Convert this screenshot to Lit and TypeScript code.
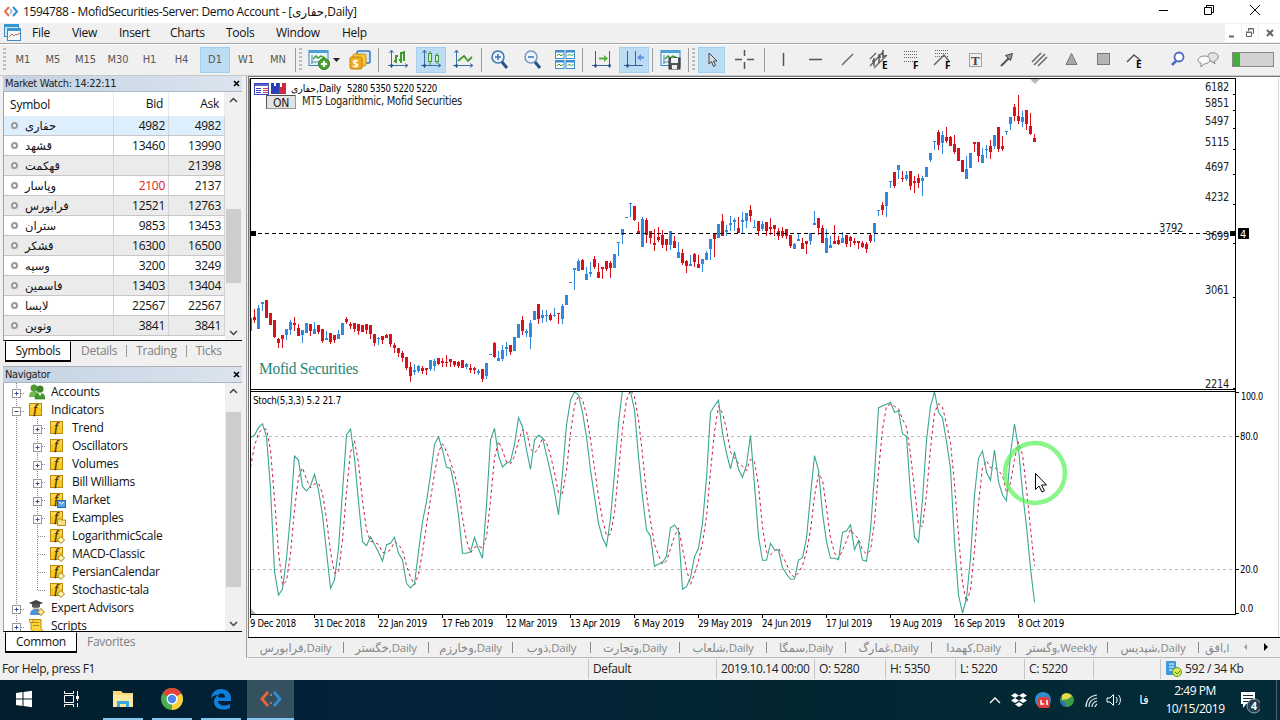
import { LitElement, css, html, svg, nothing, SVGTemplateResult } from 'lit';
import { customElement, property } from 'lit/decorators.js';
import { classMap } from 'lit/directives/class-map.js';

// u/d = bull/bear, then high, body top, body bottom, low (chart pixels)
const CANDLES = `
u 318 318 331 331|d 309 317 320 323|u 305 308 329 329|u 302 302 304 311|d 300 300 318 318
d 313 313 325 325|d 320 320 337 338|d 338 339 343 348|d 335 335 339 348|u 329 329 335 340
u 320 322 330 335|d 317 323 325 331|d 324 328 336 336|u 330 330 335 343|u 323 323 333 333
d 324 324 331 336|u 322 329 334 334|d 325 325 332 334|d 329 329 341 343|u 331 338 340 340
d 333 333 342 344|d 335 335 340 343|u 330 334 339 339|u 323 323 335 335|d 317 319 322 324
d 322 324 326 329|d 323 323 329 332|d 324 324 331 335|d 325 325 332 332|d 324 324 330 334
d 325 325 334 339|d 334 334 343 346|u 337 338 339 345|d 336 336 340 344|d 334 335 338 338
d 334 334 344 347|d 343 345 348 353|d 348 348 353 357|d 351 353 358 362|d 357 357 368 370
d 362 367 376 382|u 364 370 372 375|u 365 366 371 373|d 366 368 371 374|d 368 368 370 375
u 360 360 369 371|u 359 361 366 371|d 358 358 364 365|d 358 361 363 367|d 355 362 363 367
d 359 359 362 367|d 361 361 365 367|d 361 362 366 368|d 360 360 368 368|u 363 364 367 369
d 364 368 370 373|d 367 368 370 374|u 369 371 373 375|d 369 369 379 382|u 363 363 376 379
u 354 354 355 355|d 342 343 357 358|u 351 358 361 361|u 345 350 359 361|u 342 347 349 356
d 345 345 352 355|u 337 337 351 351|u 324 324 338 338|d 316 320 331 335|u 329 331 333 337
u 320 323 337 349|u 311 311 320 320|d 304 304 319 324|u 310 315 318 323|u 310 315 316 322
d 313 315 320 321|u 308 315 316 317|d 313 313 314 324|u 304 306 319 324|u 295 295 305 305
u 282 282 283 283|u 268 268 270 290|u 259 261 271 271|d 259 260 270 270|u 267 274 280 280
u 262 272 274 277|d 256 259 267 269|d 263 272 278 278|d 267 267 269 279|d 261 261 269 271
d 261 263 268 278|u 254 254 268 268|u 242 242 243 256|u 229 229 235 244|u 217 217 218 218
u 203 203 204 217|d 206 206 220 221|d 222 231 233 233|u 217 219 247 247|d 218 220 235 243
d 231 231 238 244|d 229 243 245 251|d 227 237 240 242|d 230 235 245 248|d 239 239 245 251
u 231 231 245 250|d 236 241 248 248|u 242 252 258 258|d 249 253 263 265|d 260 261 266 273
u 255 264 266 266|d 253 254 262 267|d 255 264 268 268|u 259 259 264 272|u 251 253 260 260
u 239 239 249 260|d 233 233 239 257|u 224 224 238 238|d 214 221 236 236|u 225 230 232 236
u 216 223 225 231|u 218 220 222 231|d 217 228 233 233|u 212 220 222 233|u 213 213 221 228
d 205 210 216 222|u 220 227 228 228|d 221 221 231 236|u 221 224 229 231|d 222 222 231 236
d 218 227 229 235|d 225 225 229 236|d 228 231 236 240|d 227 231 236 238|d 229 229 236 239
d 235 235 246 248|u 243 244 249 249|u 233 239 241 241|d 238 243 249 249|d 241 241 244 254
u 233 233 241 245|u 211 223 225 225|d 218 218 228 235|d 225 228 243 243|u 229 238 253 253
u 236 245 248 248|d 225 241 244 244|d 236 240 244 245|u 232 238 243 243|d 235 235 244 247
d 236 237 241 247|d 238 241 243 245|d 241 241 243 249|d 241 243 247 248|d 242 244 249 253
d 233 235 241 243|u 223 223 233 242|u 210 210 211 216|d 202 205 210 215|u 192 192 206 217
u 181 181 182 188|d 172 172 186 188|u 165 165 170 179|d 171 178 179 182|u 171 175 179 181
d 171 171 186 190|d 176 181 183 193|d 174 178 183 188|u 176 178 181 196|u 167 167 177 177
u 153 153 160 162|u 141 141 142 150|d 130 132 145 150|u 131 135 143 154|d 127 137 141 143
d 136 137 146 146|d 135 144 152 154|d 148 148 161 161|d 160 160 172 172|u 156 169 179 179
u 153 153 168 168|d 142 142 144 152|d 142 142 156 162|u 148 155 163 163|u 145 149 150 158
d 140 146 152 159|u 135 135 146 149|d 127 127 149 152|d 136 146 149 151|u 131 131 132 135
u 117 117 124 130|d 104 107 116 121|d 95 116 121 124|u 111 117 122 127|d 110 110 124 130
d 113 126 134 135|d 134 138 142 142`
  .trim()
  .split(/[|\n]/)
  .map((row) => {
    const [dir, ...v] = row.split(' ');
    return { up: dir === 'u', v: v.map(Number) };
  });

// %K line, in thirds of a pixel below y = 385
const STOCH = [
  158, 150, 128, 116, 155, 310, 560, 630, 612, 520, 390, 213, 226, 305, 318, 303, 268, 315, 390, 500, 610, 585, 490,
  320, 150, 132, 220, 350, 470, 482, 455, 478, 502, 528, 479, 475, 457, 505, 525, 595, 609, 596, 500, 410, 350, 270,
  178, 156, 195, 247, 250, 305, 390, 505, 505, 500, 457, 492, 520, 360, 165, 130, 212, 246, 235, 229, 178, 98, 125,
  195, 253, 165, 151, 158, 210, 262, 320, 390, 265, 120, 45, 20, 30, 82, 155, 255, 335, 415, 458, 484, 400, 265, 115,
  14, 10, 20, 75, 215, 335, 435, 453, 544, 537, 533, 513, 428, 420, 437, 613, 605, 578, 515, 490, 415, 280, 82, 62, 46,
  145, 205, 252, 200, 253, 277, 240, 151, 300, 455, 526, 526, 475, 494, 496, 548, 567, 583, 582, 525, 518, 460, 330,
  212, 255, 385, 470, 520, 520, 524, 442, 438, 419, 494, 467, 525, 529, 435, 270, 68, 63, 58, 52, 82, 78, 147, 153,
  325, 457, 472, 345, 165, 65, 20, 82, 98, 170, 250, 470, 630, 684, 640, 520, 330, 220, 198, 262, 286, 195, 290, 330,
  347, 205, 117, 190, 320, 425, 550, 652,
].map((v) => 385 + v / 3);

const SIGNAL = STOCH.map((v, i) => {
  if (i < 2) return i === 0 ? 467 : 446;
  return (v + STOCH[i - 1] + STOCH[i - 2]) / 3;
});

const barX = (i: number): number => 250.5 + i * 4;
const toPoints = (ys: number[]): string => ys.map((y, i) => `${barX(i)},${y.toFixed(1)}`).join(' ');

const PRICES: [string, number, number][] = [
  ['6182', 91, 94.5],
  ['5851', 107, 110.5],
  ['5497', 125, 128.5],
  ['5115', 146, 149.5],
  ['4697', 171, 174.5],
  ['4232', 201, 204.5],
  ['3699', 240, 243.5],
  ['3061', 294, 297.5],
  ['2214', 388, 388.5],
];

const DATES: [string, number, number][] = [
  ['9 Dec 2018', 250, 46],
  ['31 Dec 2018', 314, 51],
  ['22 Jan 2019', 378, 49],
  ['17 Feb 2019', 442, 51],
  ['12 Mar 2019', 506, 51],
  ['13 Apr 2019', 570, 50],
  ['6 May 2019', 634, 50],
  ['29 May 2019', 698, 54],
  ['24 Jun 2019', 762, 49],
  ['17 Jul 2019', 826, 46],
  ['19 Aug 2019', 890, 52],
  ['16 Sep 2019', 954, 51],
  ['8 Oct 2019', 1018, 46],
];

const QUOTES: { symbol: string; bid: string; ask: string; down?: boolean }[] = [
  { symbol: 'حفاری', bid: '4982', ask: '4982' },
  { symbol: 'قشهد', bid: '13460', ask: '13990' },
  { symbol: 'قهکمت', bid: '', ask: '21398' },
  { symbol: 'وپاسار', bid: '2100', ask: '2137', down: true },
  { symbol: 'فرابورس', bid: '12521', ask: '12763' },
  { symbol: 'ستران', bid: '9853', ask: '13453' },
  { symbol: 'قشکر', bid: '16300', ask: '16500' },
  { symbol: 'وسپه', bid: '3200', ask: '3249' },
  { symbol: 'فاسمین', bid: '13403', ask: '13404' },
  { symbol: 'لابسا', bid: '22567', ask: '22567' },
  { symbol: 'ونوین', bid: '3841', ask: '3841' },
];

const TREE: { label: string; level: number; icon: string; box?: string; last?: boolean }[] = [
  { label: 'Accounts', level: 0, icon: 'accounts', box: '+' },
  { label: 'Indicators', level: 0, icon: 'fn', box: '-' },
  { label: 'Trend', level: 1, icon: 'fn', box: '+' },
  { label: 'Oscillators', level: 1, icon: 'fn', box: '+' },
  { label: 'Volumes', level: 1, icon: 'fn', box: '+' },
  { label: 'Bill Williams', level: 1, icon: 'fn', box: '+' },
  { label: 'Market', level: 1, icon: 'fnMarket', box: '+' },
  { label: 'Examples', level: 1, icon: 'fnFolder', box: '+' },
  { label: 'LogarithmicScale', level: 1, icon: 'fnItem' },
  { label: 'MACD-Classic', level: 1, icon: 'fnItem' },
  { label: 'PersianCalendar', level: 1, icon: 'fnItem' },
  { label: 'Stochastic-tala', level: 1, icon: 'fnItem', last: true },
  { label: 'Expert Advisors', level: 0, icon: 'expert', box: '+' },
  { label: 'Scripts', level: 0, icon: 'script', box: '+' },
];

interface Tool {
  w: number;
  text?: string;
  icon?: string;
  active?: boolean;
  sep?: boolean;
  grip?: boolean;
}

const TOOLS: Tool[] = [
  { w: 8, grip: true },
  { w: 30, text: 'M1' },
  { w: 30, text: 'M5' },
  { w: 35, text: 'M15' },
  { w: 30, text: 'M30' },
  { w: 33, text: 'H1' },
  { w: 31, text: 'H4' },
  { w: 3 },
  { w: 30, text: 'D1', active: true },
  { w: 32, text: 'W1' },
  { w: 32, text: 'MN' },
  { w: 2, sep: true },
  { w: 9, grip: true },
  { w: 27, icon: 'newChart' },
  { w: 10, icon: 'drop' },
  { w: 35, icon: 'order' },
  { w: 3, sep: true },
  { w: 36, icon: 'bars' },
  { w: 30, icon: 'candles', active: true },
  { w: 33, icon: 'line' },
  { w: 4, sep: true },
  { w: 34, icon: 'zoomIn' },
  { w: 32, icon: 'zoomOut' },
  { w: 32, icon: 'tile' },
  { w: 3, sep: true },
  { w: 35, icon: 'scroll' },
  { w: 30, icon: 'shift', active: true },
  { w: 6, sep: true },
  { w: 32, icon: 'template' },
  { w: 2, sep: true },
  { w: 9, grip: true },
  { w: 27, icon: 'cursor', active: true },
  { w: 39, icon: 'cross' },
  { w: 1, sep: true },
  { w: 3 },
  { w: 32, icon: 'vline' },
  { w: 32, icon: 'hline' },
  { w: 32, icon: 'trend' },
  { w: 32, icon: 'equi' },
  { w: 32, icon: 'fibo' },
  { w: 32, icon: 'fiboFan' },
  { w: 32, icon: 'text' },
  { w: 32, icon: 'arrow' },
  { w: 32, icon: 'channel' },
  { w: 32, icon: 'triangle' },
  { w: 32, icon: 'rect' },
  { w: 32, icon: 'elliott' },
  { w: 10 },
  { w: 32, icon: 'search' },
  { w: 28, icon: 'chat' },
  { w: 10 },
];

const axes = svg`<path d="M4.5 2v17M1 16.500h19M2.500 4l2-3 2 3M18 14.500l3 2-3 2" stroke="#3f6ea5" fill="none"/>
  <circle cx="4.500" cy="16.500" r="1.500" fill="#2a5599"/>`;

const chartWindow = svg`<rect x="1" y="1.500" width="19" height="15" fill="#e9f4fc" stroke="#3a86c0"/>
  <rect x="1" y="1" width="19" height="3" fill="#4d9fd8"/>
  <path d="M4 6v9M3 13h15" stroke="#5588aa" fill="none"/>
  <path d="M5 10l3-3 2 2 3-2 4 2" stroke="#3c9a2b" fill="none" stroke-width="1.500"/>`;

const fn = svg`<rect x=".5" y="1.500" width="12" height="12" fill="#fbc822" stroke="#b98a10"/>
  <rect x="1" y="2" width="11" height="4" fill="#fdd850"/>
  <text x="4.500" y="11" font-family="Liberation Serif, serif" font-style="italic" font-size="12" stroke="#3a2900" stroke-width=".3" fill="#3a2900">f</text>`;

const ICONS: Record<string, SVGTemplateResult> = {
  newChart: svg`${chartWindow}<circle cx="16" cy="15" r="5.500" fill="#4aa52e" stroke="#2d7d18"/><path d="M16 12v6M13 15h6" stroke="#fff" stroke-width="2"/>`,
  drop: svg`<path d="M7 9h7l-3.500 4z" fill="#222"/>`,
  order: svg`<rect x="8" y="2" width="13" height="12" rx="1.500" fill="#d4e7f8" stroke="#2e77bd" stroke-width="1.500"/>
    <rect x="4" y="5" width="13" height="12" rx="1.500" fill="#f8c93a" stroke="#c98d12"/>
    <rect x="1" y="8" width="12" height="12" rx="1.500" fill="#f2a91c" stroke="#c4800e"/>
    <text x="3.500" y="18" font-family="Open Sans, sans-serif" font-weight="bold" font-size="11" fill="#fff">$</text>`,
  bars: svg`${axes}<path d="M9 6v8M7 12h2M9 7h2M14 3v11M12 11h2M14 4h3M17 2v10" stroke="#3f9b2c" stroke-width="2" fill="none"/>`,
  candles: svg`${axes}<path d="M10 2v14M17 4v11" stroke="#3f9b2c"/><rect x="8.500" y="4.500" width="3" height="8" fill="#cfeec4" stroke="#3f9b2c"/><rect x="15.500" y="6.500" width="3" height="6" fill="#cfeec4" stroke="#3f9b2c"/>`,
  line: svg`${axes}<path d="M6 12l6-5 4 5 4-4" stroke="#3f9b2c" stroke-width="1.800" fill="none"/>`,
  zoomIn: svg`<circle cx="9" cy="8" r="6" fill="#e8f3fc" stroke="#3a72b0" stroke-width="1.500"/><path d="M9 5v6M6 8h6" stroke="#3a72b0" stroke-width="1.500"/><path d="M13 13l5 6" stroke="#27518a" stroke-width="3"/>`,
  zoomOut: svg`<circle cx="9" cy="8" r="6" fill="#e8f3fc" stroke="#7b96bd" stroke-width="1.500"/><path d="M6 8h6" stroke="#3a72b0" stroke-width="1.500"/><path d="M13 13l5 6" stroke="#27518a" stroke-width="3"/>`,
  tile: svg`${[
    [1, 1],
    [11.5, 1],
    [1, 11],
    [11.5, 11],
  ].map(
    ([x, y]) => svg`<rect x=${x} y=${y} width="9.500" height="9" fill="#3c8fce"/><rect x=${x + 1} y=${y + 2.500} width="7.500" height="5.500" fill="#fff"/>
      <path d="M${x + 2} ${y + 6}l2-2 2 2 2-2" stroke="#3f9b2c" fill="none"/>`,
  )}`,
  scroll: svg`<path d="M4.500 2v17M1 16.500h19M18.500 2v17" stroke="#3f5f95" fill="none"/><circle cx="4.500" cy="16.500" r="1.500" fill="#2a5599"/><circle cx="18.500" cy="16.500" r="1.500" fill="#2a5599"/>
    <path d="M8 8.500h5V6l4 3.500-4 3.500v-2.500H8z" fill="#55b13c"/>`,
  shift: svg`<path d="M4.500 2v17M1 16.500h19M12.500 2v15" stroke="#3f5f95" fill="none"/><circle cx="4.500" cy="16.500" r="1.500" fill="#2a5599"/>
    <path d="M21 7.500h-3V5l-4 3.500 4 3.500V9.500h3z" fill="#5b8fe0"/>`,
  template: svg`${chartWindow}<rect x="9" y="9" width="11" height="11" fill="#555" stroke="#333"/><rect x="11" y="9" width="7" height="5" fill="#f3f3f3"/><rect x="12" y="16" width="5" height="4" fill="#eee"/>`,
  cursor: svg`<path d="M8 4l0 11 2.500-2.500 2 5 2-1-2-4.500H16z" fill="#ddd" stroke="#444"/>`,
  cross: svg`<path d="M10.500 1v6M10.500 13v7M1 10.500h7M13 10.500h7" stroke="#555" stroke-width="1.500"/>`,
  vline: svg`<path d="M10.500 4v13" stroke="#555" stroke-width="1.500"/>`,
  hline: svg`<path d="M4 10.500h13" stroke="#555" stroke-width="1.500"/>`,
  trend: svg`<path d="M5 16L16 5" stroke="#666" stroke-width="1.500"/>`,
  equi: svg`<path d="M1 17L14 3M5 19L18 6M1 10L7 4" stroke="#666" stroke-width="1.300"/><path d="M5 9v8M3 12h2M10 5v9M10 8h2M14 1v8M12 5h2M14 7h3" stroke="#555" stroke-width="1.500"/>
    <text x="13" y="19.500" font-family="Open Sans, sans-serif" font-weight="bold" font-size="10" fill="#000">E</text>`,
  fibo: svg`<path d="M3 2.500h14M3 5.500h14M3 8.500h14M3 12.500h10" stroke="#666" stroke-dasharray="1 1"/>
    <text x="12" y="20" font-family="Open Sans, sans-serif" font-weight="bold" font-size="10" fill="#000">F</text>`,
  fiboFan: svg`<path d="M2 1.500h13M2 4.500h13M2 7.500h13" stroke="#666" stroke-dasharray="1 1"/><path d="M1 16L11 6l5 6" stroke="#666" stroke-width="1.500" fill="none"/>
    <text x="12" y="20" font-family="Open Sans, sans-serif" font-weight="bold" font-size="10" fill="#000">F</text>`,
  text: svg`<rect x="4.500" y="4.500" width="12" height="13" fill="none" stroke="#555" stroke-dasharray="1 1"/>
    <text x="6" y="15.500" font-family="Liberation Serif, serif" font-weight="bold" font-size="13" fill="#444">T</text>`,
  arrow: svg`<path d="M4 17L12 9" stroke="#555" stroke-width="2"/><path d="M8.500 6.500l7-2-2 7z" fill="#999" stroke="#444"/>`,
  channel: svg`<path d="M3 13L12 4M5 16L16 5M9 17L18 8" stroke="#666" stroke-width="1.500"/>`,
  triangle: svg`<path d="M10.500 4.500l5.500 11H5z" fill="#a8a8a8" stroke="#777"/>`,
  rect: svg`<rect x="4.500" y="4.500" width="12" height="11" fill="#b4b4b4" stroke="#777"/>`,
  elliott: svg`<path d="M2 13l7-7 6 5" stroke="#555" stroke-width="1.500" fill="none"/>
    <text x="11" y="19" font-family="Open Sans, sans-serif" font-weight="bold" font-size="10" fill="#000">E</text>`,
  search: svg`<circle cx="12" cy="8" r="4.500" fill="#fff" stroke="#4a68cc" stroke-width="1.800"/><path d="M9 12l-4 4" stroke="#4a68cc" stroke-width="2.500"/>`,
  chat: svg`<path d="M14 4c5-1 8 2 7 5-1 2-2 3-4 3l1 3-4-3c-3 0-4-3-3-5 0-1 1-3 3-3z" fill="#e3e3e3" stroke="#888"/>
    <path d="M7 7c4 0 6 2 6 4s-3 4-6 4l-3 3v-4c-2 0-3-1-3-3s3-4 6-4z" fill="#fafafa" stroke="#888"/>`,
  accounts: svg`<circle cx="5" cy="4" r="3.500" fill="#4f9a35"/><circle cx="11" cy="5" r="3.500" fill="#3b8428"/>
    <path d="M0 13c0-4 2-6 5-6s5 2 5 6z" fill="#6dbb48"/><path d="M6 15c0-4 2-6 5-6s5 2 5 6z" fill="#3f9b2c" stroke="#2b701b" stroke-width=".6"/><path d="M9 9l2 3 2-3z" fill="#e9f7df"/>`,
  fn,
  fnMarket: svg`${fn}<rect x="7.500" y="8.500" width="8" height="7" fill="#5ba3e6" stroke="#2368b0"/><path d="M9 10l2.500 2 2.500-2" stroke="#fff" fill="none"/>`,
  fnFolder: svg`${fn}<path d="M7.500 9h3l1 1h4v5.500h-8z" fill="#f9e08a" stroke="#b98a10"/>`,
  fnItem: svg`${fn}<path d="M11 8.500l3.500 3.500-3.500 3.500L7.500 12z" fill="#fff3b0" stroke="#a07a10"/>`,
  expert: svg`<circle cx="7" cy="7" r="3.500" fill="#e6c39a"/><path d="M1 15c0-4 2-6 6-6s5 2 5 6z" fill="#4c92d6"/><path d="M0 3l7-3 7 3-7 3z" fill="#444"/><path d="M3 4v3c2 1 6 1 8 0V4" fill="#555"/>
    <path d="M12 8.500l3.500 3.500-3.500 3.500L8.500 12z" fill="#ffe98a" stroke="#a07a10"/>`,
  script: svg`<path d="M2 1.500h10v9l3 4H5l-3-3z" fill="#fbd53c" stroke="#b98a10"/><path d="M4 4.500h6M4 7.500h6" stroke="#b98a10"/><path d="M0 1.500h4v3H1z" fill="#fce78c" stroke="#b98a10"/>`,
};

@customElement('mt-icon')
export class MtIcon extends LitElement {
  @property() name = '';
  @property({ type: Number }) size = 22;

  static styles = css`
    :host {
      display: block;
      flex: none;
    }
    svg {
      display: block;
    }
  `;

  render() {
    return html`<svg width=${this.size} height=${this.size} viewBox="0 0 ${this.size} ${this.size}">
      ${ICONS[this.name] ?? nothing}
    </svg>`;
  }
}

@customElement('mt-chart')
export class MtChart extends LitElement {
  static styles = css`
    :host {
      display: block;
    }
    svg {
      display: block;
    }
    text {
      font-family: 'DejaVu Sans Condensed', 'DejaVu Sans', sans-serif;
      font-size: 10px;
      fill: #000;
    }
    .scale {
      font-size: 11.500px;
      fill: #222;
    }
    .brand {
      font-family: 'Liberation Serif', serif;
      font-size: 16px;
      fill: #1f8577;
    }
    .ui {
      font-size: 11.500px;
      fill: #222;
    }
    .tag {
      font-size: 11px;
      fill: #fff;
    }
  `;

  render() {
    return html`<svg width="1032" height="561" viewBox="248 76 1032 561">
      <rect x="248" y="76" width="1032" height="561" fill="#fff" />
      <path d="M248 76.500h1032M248.500 76v561" stroke="#77777c" />
      <path d="M1278.500 78v559" stroke="#d8d8d8" />
      ${this.renderPrice()} ${this.renderStoch()}
      <path d="M250 78.500H1235.500V389.500H250.500zM1235.500 391.500H250.500V614.500H1235.500z" fill="none" stroke="#000" />
      <path d="M1235.500 78v537M250.500 78v537" stroke="#000" />
      <path d="M1030 79h10l-5 5z" fill="#b8b8b8" />
      <path d="M251 609v5h5z" fill="#b0b0b0" />
      ${this.renderHeader()} ${this.renderDates()} ${this.renderPointer()}
    </svg>`;
  }

  private renderPrice() {
    return svg`
      <clipPath id="price"><rect x="250" y="79" width="985" height="310" /></clipPath>
      <g clip-path="url(#price)">
        ${CANDLES.map(({ up, v }, i) => {
          const x = 250 + i * 4;
          const color = up ? '#3089dd' : '#d8121c';
          const [high, top, bottom, low] = v;
          const flat = bottom - top <= 1;
          return svg`<rect x=${x} y=${high} width="1" height=${Math.max(1, low - high)} fill=${color} />
            <rect x=${x - 1} y=${top} width="3" height=${flat ? 1 : bottom - top} fill=${color} />`;
        })}
      </g>
      <path d="M251 233.500H1233" stroke="#000" stroke-dasharray="4 3" />
      <rect x="251" y="231" width="5" height="5" />
      <rect x="1230" y="231" width="5" height="5" />
      <rect x="1238" y="228" width="11" height="11" />
      <text class="tag" x="1240" y="238">4</text>
      <text class="scale" x="1159" y="232" textLength="24" lengthAdjust="spacingAndGlyphs">3792</text>
      ${PRICES.map(
        ([label, y, tick]) => svg`<text class="scale" x="1205" y=${y} textLength="24" lengthAdjust="spacingAndGlyphs">${label}</text>
          <path d="M1233 ${tick}h3" stroke="#000" />`,
      )}
      <text class="brand" x="259" y="374" textLength="99" lengthAdjust="spacingAndGlyphs">Mofid Securities</text>
    `;
  }

  private renderStoch() {
    return svg`
      <clipPath id="pane"><rect x="251" y="392" width="984" height="222" /></clipPath>
      <path d="M251 436.500H1235M251 569.500H1235" stroke="#b9b9b9" stroke-dasharray="3 3" />
      <g clip-path="url(#pane)" fill="none">
        <polyline points=${toPoints(SIGNAL)} stroke="#cc1f3c" stroke-dasharray="3 3" />
        <polyline points=${toPoints(STOCH)} stroke="#3aa594" stroke-width="1.100" />
      </g>
      <text x="253" y="404" textLength="88" lengthAdjust="spacingAndGlyphs">Stoch(5,3,3) 5.2 21.7</text>
      <path d="M1236 392.500h3M1236 436.500h3M1236 569.500h3M1236 613.500h3" stroke="#000" />
      <text x="1241" y="400" textLength="22" lengthAdjust="spacingAndGlyphs">100.0</text>
      <text x="1240" y="440" textLength="18" lengthAdjust="spacingAndGlyphs">80.0</text>
      <text x="1240" y="573" textLength="18" lengthAdjust="spacingAndGlyphs">20.0</text>
      <text x="1240" y="612" textLength="13" lengthAdjust="spacingAndGlyphs">0.0</text>
    `;
  }

  private renderHeader() {
    return svg`
      <rect x="254.500" y="83.500" width="14" height="11" fill="#fff" stroke="#3a46b5" />
      <rect x="255" y="84" width="14" height="2" fill="#5a66c5" />
      <path d="M256 88.500h5M256 90.500h5M256 92.500h5" stroke="#3a46b5" /><path d="M263 88.500h5M263 90.500h5M263 92.500h5" stroke="#d0454c" />
      <path d="M271 83h3v3h2v-3h3v11h-8z" fill="#2a3fb5" /><path d="M279 83h1v4h2v-4h4v11h-7z" fill="#c92a3c" />
      <text x="291" y="92" textLength="50" lengthAdjust="spacingAndGlyphs">حفاری,Daily</text>
      <text x="347" y="92" textLength="90" lengthAdjust="spacingAndGlyphs">5280 5350 5220 5220</text>
      <rect x="266.500" y="95.500" width="29" height="13" fill="#e3e3e3" stroke="#9a9a9a" />
      <path d="M266.500 109v-13.500h29" fill="none" stroke="#555" />
      <text class="ui" x="273" y="106.500" textLength="16" lengthAdjust="spacingAndGlyphs">ON</text>
      <text class="ui" x="302" y="105" textLength="160" lengthAdjust="spacingAndGlyphs">MT5 Logarithmic, Mofid Securities</text>
    `;
  }

  private renderDates() {
    return DATES.map(
      ([label, x, len]) => svg`<path d="M${x + 0.5} 614v4" stroke="#000" />
        <text x=${x} y="627" textLength=${len} lengthAdjust="spacingAndGlyphs">${label}</text>`,
    );
  }

  private renderPointer() {
    return svg`
      <circle cx="1035" cy="473" r="30" fill="none" stroke="#5cf25c" stroke-opacity=".72" stroke-width="4.500" />
      <path d="M1035.500 473.500v16l3.500-3.500 3 6 2.500-1.200-3-5.800h5z" fill="#fff" stroke="#000" />
    `;
  }
}

@customElement('app-root')
export class AppRoot extends LitElement {
  static styles = css`
    :host {
      display: flex;
      flex-direction: column;
      width: 1280px;
      height: 720px;
      overflow: hidden;
      background: #f0f0f0;
      color: #111;
      font-family: 'Open Sans', 'DejaVu Sans', sans-serif;
      font-size: 12px;
      line-height: 18px;
      letter-spacing: -0.28px;
      white-space: nowrap;
    }
    * {
      box-sizing: border-box;
    }
    svg {
      display: block;
      flex: none;
    }
    .titlebar {
      display: flex;
      align-items: center;
      height: 23px;
      padding: 0 14px 0 3px;
      gap: 4px;
      background: #fff;
    }
    .titlebar .name {
      flex: 1;
      letter-spacing: -0.36px;
    }
    .titlebar .controls {
      margin-bottom: 3px;
    }
    .menubar {
      display: flex;
      align-items: center;
      height: 21px;
      padding-left: 4px;
      border-bottom: 1px solid #a5a5a5;
    }
    .menubar span {
      flex: none;
    }
    .mdi {
      display: flex;
      gap: 1px;
      margin-left: auto;
    }
    .mdi svg {
      background: #fff;
    }
    .toolbar {
      display: flex;
      align-items: center;
      height: 32px;
      padding-bottom: 1px;
      border-top: 1px solid #fff;
      border-bottom: 1px solid #c8c8c8;
    }
    .tool {
      display: flex;
      align-items: center;
      justify-content: center;
      flex: none;
      height: 26px;
      font-family: 'DejaVu Sans Condensed', 'DejaVu Sans', sans-serif;
      font-size: 11px;
      letter-spacing: 0;
      color: #555;
    }
    .tool.active {
      background: #bcdcf4;
      border: 1px solid #a5cfee;
    }
    .tool.sep::before {
      content: '';
      width: 1px;
      height: 24px;
      background: #9c9c9c;
    }
    .tool.grip::before {
      content: '';
      width: 3px;
      height: 24px;
      background: repeating-linear-gradient(#bbb 0 2px, #f0f0f0 2px 4px);
    }
    .meter {
      width: 42px;
      height: 15px;
      border: 1px solid #888;
      background: linear-gradient(90deg, #3fae3b 7px, #d2d2d2 7px);
    }
    .body {
      display: flex;
      height: 582px;
    }
    .side {
      display: flex;
      flex-direction: column;
      width: 247px;
      padding: 0 4px 0 3px;
      border-right: 1px solid #a0a0a0;
    }
    .caption {
      display: flex;
      align-items: center;
      justify-content: space-between;
      height: 16px;
      padding: 0 2px;
      background: linear-gradient(90deg, #c3d2e2, #dbe4ee);
      border-bottom: 1px solid #a9b7c6;
      color: #222;
      font-family: 'DejaVu Sans Condensed', 'DejaVu Sans', sans-serif;
      font-size: 11px;
      letter-spacing: -0.35px;
    }
    .panel {
      display: flex;
      border-left: 1px solid #a0a0a0;
      border-bottom: 1px solid #000;
      background: #fff;
      overflow: hidden;
    }
    .watch,
    .nav {
      height: 249px;
    }
    .grid {
      width: 221px;
    }
    .row {
      display: grid;
      grid-template-columns: 110px 55px 56px;
      height: 20px;
      border-bottom: 1px solid #c6c6c6;
      line-height: 19px;
    }
    .row > * {
      padding-right: 3px;
      border-right: 1px solid #d4d4d4;
      text-align: right;
    }
    .row .sym {
      display: flex;
      align-items: center;
      gap: 7px;
      padding-left: 7px;
      font-size: 11.500px;
      letter-spacing: 0;
    }
    .row.odd {
      background: #ebebeb;
    }
    .row.selected {
      background: #ddeefc;
    }
    .row.head {
      height: 24px;
      border-bottom: 0;
      line-height: 23px;
    }
    .row.head > * {
      padding-right: 5px;
      border-color: #ebebeb;
    }
    .row.head .sym {
      padding-left: 6px;
      font-size: 12px;
      letter-spacing: -0.2px;
    }
    .down {
      color: #e02020;
    }
    .dot {
      width: 7px;
      height: 7px;
      border: 2px solid #9a9a9a;
      border-radius: 50%;
      background: #fff;
    }
    .scroll {
      display: flex;
      flex-direction: column;
      justify-content: space-between;
      align-items: center;
      width: 17px;
      padding: 4px 0 3px;
      background: #f0f0f0;
    }
    .thumb {
      width: 15px;
      background: #cdcdcd;
    }
    .watch .thumb {
      height: 74px;
      margin-top: 92px;
      margin-bottom: 34px;
    }
    .nav .thumb {
      height: 175px;
      margin-top: 4px;
      margin-bottom: 20px;
    }
    .tabs {
      display: flex;
      align-items: center;
      height: 21px;
      padding-left: 2px;
      color: #808080;
    }
    .tabs .on {
      height: 21px;
      margin-top: -1px;
      border: 1px solid #000;
      border-top: 1px solid #fff;
      border-bottom-width: 2px;
      background: #fff;
      color: #111;
      text-align: center;
    }
    .tabs.symbols .on {
      width: 66px;
    }
    .tabs.common .on {
      width: 72px;
    }
    .tabs .off {
      padding: 0 10px 2px;
    }
    .tabs .bar {
      width: 1px;
      height: 12px;
      margin: 0 9px 2px 8px;
      background: #999;
    }
    .tabs.symbols .off {
      padding: 0 1px 2px 10px;
    }
    .tabs.symbols .bar + .off {
      padding-left: 0;
    }
    .gap {
      height: 5px;
      border-bottom: 1px solid #b0b0b0;
    }
    .tree {
      width: 221px;
    }
    .node {
      display: flex;
      align-items: center;
      height: 18px;
      line-height: 16px;
    }
    .node span {
      padding-bottom: 1px;
    }
    .node mt-icon {
      margin: 0 6px 0 4px;
    }
    .workspace {
      display: flex;
      flex-direction: column;
      width: 1033px;
      padding-left: 1px;
    }
    .charttabs {
      display: flex;
      align-items: center;
      height: 21px;
      border-top: 1px solid #000;
      border-bottom: 1px solid #b8b8b8;
      color: #868686;
      font-size: 11.500px;
    }
    .charttabs span {
      flex: none;
      overflow: hidden;
      height: 18px;
      text-align: center;
    }
    .charttabs i {
      width: 1px;
      height: 11px;
      background: #8c8c8c;
    }
    .charttabs svg {
      margin-left: 8px;
    }
    .status {
      display: flex;
      align-items: center;
      height: 22px;
      color: #222;
      letter-spacing: -0.4px;
    }
    .status span {
      flex: none;
      display: flex;
      align-items: center;
      gap: 3px;
      height: 20px;
      padding-left: 4px;
      border-left: 1px solid #c6c6c6;
    }
    .status span:first-child {
      padding-left: 2px;
      border-left: 0;
    }
    .taskbar {
      display: flex;
      align-items: stretch;
      height: 40px;
      padding-left: 2px;
      background: linear-gradient(90deg, #021e2d, #03233a 32%, #022530 60%, #032c38);
      color: #fff;
    }
    .app {
      display: flex;
      align-items: center;
      justify-content: center;
      width: 40px;
      margin-right: 9px;
      border-bottom: 2px solid #85c5ee;
    }
    .app.plain {
      border-bottom-color: transparent;
    }
    .app.plain + .app:not(.plain) {
      margin-left: 3px;
    }
    .app.current {
      width: 47px;
      margin: 0 0 0 -3px;
      background: #35505f;
    }
    .tray {
      display: flex;
      align-items: center;
      margin-left: auto;
    }
    .tray .lang {
      width: 32px;
      margin-left: 4px;
      text-align: center;
    }
    .clock {
      width: 66px;
      margin: 0 2px 0 2px;
      text-align: center;
      letter-spacing: -0.45px;
    }
    .edge {
      width: 4px;
      height: 40px;
      margin-left: 16px;
      border-left: 1px solid #4a626e;
    }
  `;

  render() {
    return html`
      ${this.renderTitle()} ${this.renderMenu()} ${this.renderToolbar()}
      <div class="body">
        <div class="side">${this.renderWatch()} ${this.renderNavigator()}</div>
        <div class="workspace">
          <mt-chart></mt-chart>
          ${this.renderChartTabs()}
        </div>
      </div>
      ${this.renderStatus()} ${this.renderTaskbar()}
    `;
  }

  private renderTitle() {
    return html`<div class="titlebar">
      <svg width="16" height="16" viewBox="0 0 16 16" fill="none" stroke-width="2">
        <path d="M6 3L2 7.500 6 12" stroke="#e8734a" />
        <path d="M10 3l4 4.500L10 12" stroke="#2f8fd0" />
        <path d="M7 5l2 2.500L7 10" stroke="#8fb8d4" stroke-width="1.500" />
      </svg>
      <span class="name">1594788 - MofidSecurities-Server: Demo Account - [حفاری,Daily]</span>
      <svg class="controls" width="108" height="20" viewBox="0 0 108 20" fill="none" stroke="#000">
        <path d="M1 10.500h9" />
        <path d="M46.500 7.500h7v7h-7zM48.500 7V5.500h7v7h-2" />
        <path d="M92 5l10 10M102 5L92 15" />
      </svg>
    </div>`;
  }

  private renderMenu() {
    const items: [string, number][] = [
      ['File', 40],
      ['View', 47],
      ['Insert', 51],
      ['Charts', 56],
      ['Tools', 50],
      ['Window', 66],
      ['Help', 40],
    ];
    return html`<div class="menubar">
      <svg width="28" height="18" viewBox="0 0 28 18">
        <rect x=".5" y=".5" width="14" height="12" fill="#cfe7f7" stroke="#3b8ac4" />
        <rect x="0" y="0" width="15" height="3" fill="#3b96d2" />
        <rect x="3.500" y="4.500" width="13" height="12" fill="#f4fafd" stroke="#3b8ac4" />
        <rect x="3" y="4" width="14" height="3" fill="#3b96d2" />
        <path d="M5 13l3-3 2 2 2-2 1 1 3-2" stroke="#d9633f" fill="none" />
      </svg>
      ${items.map(([label, w]) => html`<span style="width:${w}px">${label}</span>`)}
      <div class="mdi">
        <svg width="16" height="18" viewBox="0 0 16 18"><path d="M4 12.500h5" stroke="#666" stroke-width="2" /></svg>
        <svg width="16" height="18" viewBox="0 0 16 18" fill="none" stroke="#666">
          <path d="M4.500 8.500h5v4h-5zM4 8h6M6.500 7V4.500h5v5h-1M6 5h6" />
        </svg>
        <svg width="21" height="18" viewBox="0 0 21 18">
          <path d="M8 6l6 6M14 6l-6 6" stroke="#666" stroke-width="2" />
        </svg>
      </div>
    </div>`;
  }

  private renderToolbar() {
    return html`<div class="toolbar">
      ${TOOLS.map(
        (t) => html`<div
          class=${classMap({ tool: true, active: !!t.active, sep: !!t.sep, grip: !!t.grip })}
          style="width:${t.w}px"
        >
          ${t.text ?? nothing}${t.icon ? html`<mt-icon name=${t.icon}></mt-icon>` : nothing}
        </div>`,
      )}
      <div class="meter"></div>
    </div>`;
  }

  private renderCaption(label: string) {
    return html`<div class="caption">
      <span>${label}</span>
      <svg width="7" height="7" viewBox="0 0 7 7"><path d="M1 1l5 5M6 1L1 6" stroke="#000" stroke-width="1.600" /></svg>
    </div>`;
  }

  private renderScroll() {
    return html`<div class="scroll">
      <svg width="9" height="8" viewBox="0 0 9 8"><path d="M1 6l3.500-3.500L8 6" stroke="#444" stroke-width="1.500" fill="none" /></svg>
      <div class="thumb"></div>
      <svg width="9" height="8" viewBox="0 0 9 8"><path d="M1 2l3.500 3.500L8 2" stroke="#444" stroke-width="1.500" fill="none" /></svg>
    </div>`;
  }

  private renderWatch() {
    return html`
      ${this.renderCaption('Market Watch: 14:22:11')}
      <div class="panel watch">
        <div class="grid">
          <div class="row head"><span class="sym">Symbol</span><span>Bid</span><span>Ask</span></div>
          ${QUOTES.map(
            (q, i) => html`<div class=${classMap({ row: true, selected: i === 0, odd: i > 0 && i % 2 === 0 })}>
              <span class="sym"><span class="dot"></span>${q.symbol}</span>
              <span class=${q.down ? 'down' : ''}>${q.bid}</span>
              <span>${q.ask}</span>
            </div>`,
          )}
        </div>
        ${this.renderScroll()}
      </div>
      <div class="tabs symbols">
        <span class="on">Symbols</span><span class="off">Details</span><i class="bar"></i
        ><span class="off">Trading</span><i class="bar"></i><span class="off">Ticks</span>
      </div>
    `;
  }

  private renderNode(n: (typeof TREE)[number]) {
    const boxX = n.level === 0 ? 12 : 33;
    const width = n.level === 0 ? 21 : 42;
    return html`<div class="node">
      <svg width=${width} height="18" viewBox="0 0 ${width} 18" fill="none">
        <g stroke="#888" stroke-dasharray="1 1">
          <path d="M12.500 0v18" />
          ${n.level === 1
            ? svg`<path d="M33.500 0v${n.last ? 10 : 18}M34 9.500h9" />`
            : svg`<path d="M13 10.500h9" />`}
        </g>
        ${n.box
          ? svg`<rect x=${boxX - 3.5} y="6.500" width="8" height="8" fill="#fff" stroke="#999" />
              <path d="M${boxX - 1.5} 10.500h4${n.box === '+' ? 'm-2 -2v4' : ''}" stroke="#3a4a9a" />`
          : nothing}
      </svg>
      <mt-icon name=${n.icon} size="16"></mt-icon>
      <span>${n.label}</span>
    </div>`;
  }

  private renderNavigator() {
    return html`
      <div class="gap"></div>
      ${this.renderCaption('Navigator')}
      <div class="panel nav">
        <div class="tree">${TREE.map((n) => this.renderNode(n))}</div>
        ${this.renderScroll()}
      </div>
      <div class="tabs common"><span class="on">Common</span><span class="off">Favorites</span></div>
    `;
  }

  private renderChartTabs() {
    const tabs: [string, number][] = [
      ['فرابورس,Daily', 95],
      ['خگستر,Daily', 84],
      ['وخارزم,Daily', 83],
      ['ذوب,Daily', 77],
      ['وتجارت,Daily', 88],
      ['شلعاب,Daily', 86],
      ['سمگا,Daily', 78],
      ['غمارگ,Daily', 85],
      ['کهمدا,Daily', 83],
      ['وگستر,Weekly', 91],
      ['شپدیس,Daily', 90],
      ['افق,I', 36],
    ];
    return html`<div class="charttabs">
      ${tabs.map(([label, w], i) => html`<span style="width:${w}px">${label}</span>${i < 11 ? html`<i></i>` : nothing}`)}
      <svg width="34" height="9" viewBox="0 0 34 9">
        <path d="M4 1v6L1 4z" fill="#999" />
        <path d="M21 0v8l4-4z" fill="#000" />
      </svg>
    </div>`;
  }

  private renderStatus() {
    const cells: [string, number][] = [
      ['For Help, press F1', 588],
      ['Default', 128],
      ['2019.10.14 00:00', 98],
      ['O: 5280', 71],
      ['H: 5350', 70],
      ['L: 5220', 69],
      ['C: 5220', 69],
      ['', 67],
    ];
    return html`<div class="status">
      ${cells.map(([label, w]) => html`<span style="width:${w}px">${label}</span>`)}
      <span>
        <svg width="17" height="16" viewBox="0 0 17 16">
          <rect x="1" y="0" width="10" height="14" rx="1" fill="#3b9bdc" />
          <path d="M4 3h5M4 6h5M4 9h4" stroke="#fff" />
          <circle cx="12" cy="11" r="4.500" fill="#d9e84d" stroke="#4b9b2f" />
          <path d="M10 11l2 2 3-3" stroke="#3b8a26" fill="none" />
        </svg>
        592 / 34 Kb
      </span>
    </div>`;
  }

  private renderTaskbar() {
    return html`<div class="taskbar">
      <div class="app plain">
        <svg width="36" height="18" viewBox="0 0 36 18" fill="#fff">
          <path d="M12 3l6.500-1v6.500H12zM19.500 1.900L28 .7v7.800h-8.500zM12 9.500h6.500V16L12 15zM19.500 9.500H28v7.800l-8.500-1.200z" />
        </svg>
      </div>
      <div class="app plain">
        <svg width="24" height="18" viewBox="0 0 24 18" fill="none" stroke="#fff">
          <path d="M5.500 5.500h9v7h-9zM5.500 1v2.500h9V1M5.500 17v-2.500h9V17M18.500 1v10M18.500 13v4" />
          <path d="M17 6h3v3h-3z" fill="#fff" stroke="none" />
        </svg>
      </div>
      <div class="app">
        <svg width="24" height="20" viewBox="0 0 24 20">
          <path d="M2 2h8l2 2h10v14H2z" fill="#f6d877" /><path d="M2 6h20v12H2z" fill="#fbe8a0" />
          <path d="M6 18v-6h12v6h-3v-3H9v3z" fill="#3ba7dd" />
        </svg>
      </div>
      <div class="app">
        <svg width="24" height="24" viewBox="0 0 24 24">
          <circle cx="12" cy="12" r="11" fill="#4aae4e" />
          <path d="M12 12L2.500 6.500A11 11 0 0 1 21.500 6.500z" fill="#e0443a" />
          <path d="M12 12L21.500 6.500A11 11 0 0 1 12 23z" fill="#fbcf3b" />
          <circle cx="12" cy="12" r="5.500" fill="#fff" /><circle cx="12" cy="12" r="4.200" fill="#4a87ee" />
        </svg>
      </div>
      <div class="app">
        <svg width="22" height="22" viewBox="0 0 22 22">
          <path
            d="M1 10C2 4 6 1 11 1c6 0 10 4 10 9v3H8c0 3 3 4.500 6 4.500 2 0 4-.5 6-1.500v4c-2 1-4 1.500-7 1.500-6 0-9-3.500-9-8 0-3 2-5.500 5-7C5 7 2.500 8 1 10zM8 9.500h7C15 7 14 5.500 11.500 5.500S8 7 8 9.500z"
            fill="#0f7fdc"
          />
        </svg>
      </div>
      <div class="app current">
        <svg width="24" height="22" viewBox="0 0 24 22" fill="none" stroke-width="2.800">
          <path d="M9 4L3 11l6 7" stroke="#e8643c" />
          <path d="M15 4l6 7-6 7" stroke="#2d8fd2" />
          <path d="M12 6v2M12 14v2" stroke="#bb8a7a" stroke-width="1.500" />
        </svg>
      </div>
      <div class="tray">
        <svg width="136" height="22" viewBox="988 689 136 22" fill="none">
          <path d="M990 703l5-5 5 5" stroke="#fff" stroke-width="1.300" />
          <path
            d="M1015 693l4 2.500-4 2.500-4-2.500zM1023 693l4 2.500-4 2.500-4-2.500zM1015 698l4 2.500-4 2.500-4-2.500zM1023 698l4 2.500-4 2.500-4-2.500zM1019 702l4 2.500-4 2.500-4-2.500z"
            fill="#fff"
          />
          <circle cx="1043" cy="700" r="8" fill="#2d8fd2" />
          <rect x="1038" y="697" width="12" height="11" rx="2" fill="#e03c3c" />
          <path d="M1041 700v4h3M1047 700v5" stroke="#fff" stroke-width="1.500" />
          <circle cx="1067" cy="700" r="7" fill="#3d9b45" />
          <path d="M1062 695c3-3 8-2 10 1l-4 3-6 1z" fill="#e6d94a" />
          <path d="M1060 700a7 7 0 0 0 6 7c0-4-2-6-6-7z" fill="#2b6fc0" />
          <g stroke="#dfe6ea" stroke-width="1.200">
            <path d="M1086 707c0-7 4-11 11-12M1089 707c0-5 3-8 8-9M1092 707c0-3 2-5 5-6M1095 707c0-1 1-2 2-3" />
          </g>
          <path d="M1107 698v4h3l3.500 3.500v-11L1110 698z" stroke="#fff" />
          <path d="M1116 697c1.500 2 1.500 4 0 6M1118.500 695c2.500 3 2.500 7 0 10" stroke="#fff" />
        </svg>
        <div class="lang">فا</div>
        <div class="clock">2:49 PM<br />10/15/2019</div>
        <svg width="30" height="28" viewBox="0 0 30 28">
          <path d="M11 6h14v12h-9l-3 4v-4h-2z" fill="#fff" />
          <path d="M13 9.500h10M13 12.500h10M13 15.500h6" stroke="#12303e" />
          <circle cx="24" cy="20" r="7" fill="#23404e" stroke="#8fa3ad" />
          <text x="21" y="24" font-family="Open Sans, sans-serif" font-size="10.500" font-weight="bold" fill="#fff">4</text>
        </svg>
        <div class="edge"></div>
      </div>
    </div>`;
  }
}
